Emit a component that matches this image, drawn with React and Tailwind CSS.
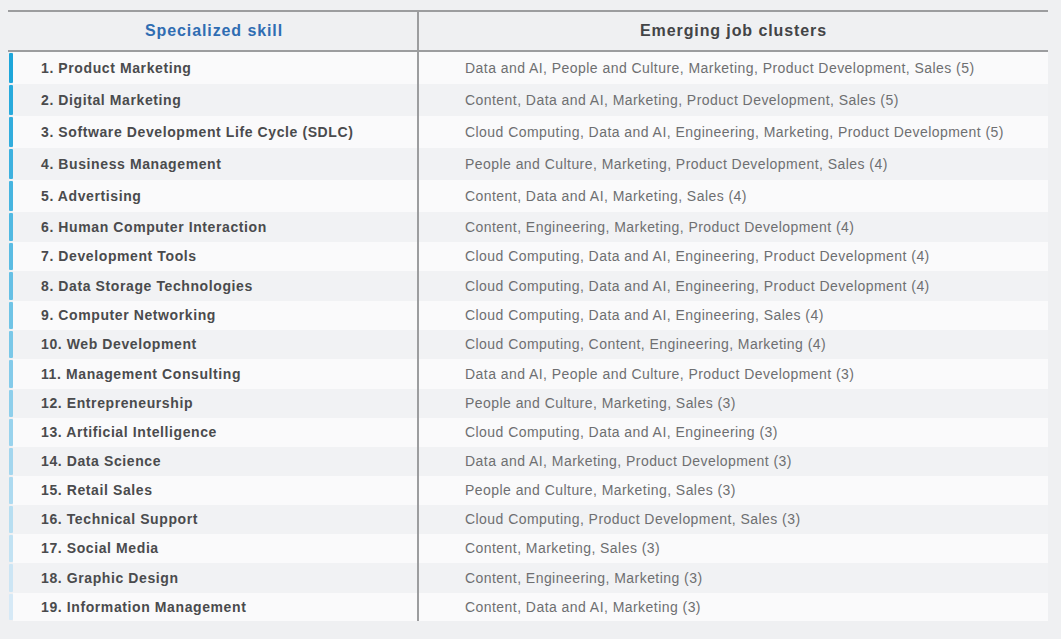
const rows = [
  ['1. Product Marketing', 'Data and AI, People and Culture, Marketing, Product Development, Sales (5)', 32],
  ['2. Digital Marketing', 'Content, Data and AI, Marketing, Product Development, Sales (5)', 32],
  ['3. Software Development Life Cycle (SDLC)', 'Cloud Computing, Data and AI, Engineering, Marketing, Product Development (5)', 32],
  ['4. Business Management', 'People and Culture, Marketing, Product Development, Sales (4)', 32],
  ['5. Advertising', 'Content, Data and AI, Marketing, Sales (4)', 32],
  ['6. Human Computer Interaction', 'Content, Engineering, Marketing, Product Development (4)', 30],
  ['7. Development Tools', 'Cloud Computing, Data and AI, Engineering, Product Development (4)', 29],
  ['8. Data Storage Technologies', 'Cloud Computing, Data and AI, Engineering, Product Development (4)', 30],
  ['9. Computer Networking', 'Cloud Computing, Data and AI, Engineering, Sales (4)', 29],
  ['10. Web Development', 'Cloud Computing, Content, Engineering, Marketing (4)', 29],
  ['11. Management Consulting', 'Data and AI, People and Culture, Product Development (3)', 30],
  ['12. Entrepreneurship', 'People and Culture, Marketing, Sales (3)', 29],
  ['13. Artificial Intelligence', 'Cloud Computing, Data and AI, Engineering (3)', 29],
  ['14. Data Science', 'Data and AI, Marketing, Product Development (3)', 29],
  ['15. Retail Sales', 'People and Culture, Marketing, Sales (3)', 29],
  ['16. Technical Support', 'Cloud Computing, Product Development, Sales (3)', 29],
  ['17. Social Media', 'Content, Marketing, Sales (3)', 29],
  ['18. Graphic Design', 'Content, Engineering, Marketing (3)', 30],
  ['19. Information Management', 'Content, Data and AI, Marketing (3)', 28],
];

// bar fades from strong blue to pale blue down the list
const barColor = (i) => {
  const t = i / (rows.length - 1);
  const from = [30, 166, 218];
  const to = [214, 233, 246];
  const c = from.map((v, k) => Math.round(v + (to[k] - v) * t));
  return `rgb(${c[0]}, ${c[1]}, ${c[2]})`;
};

export default function App() {
  return (
    <div className="h-[639px] w-[1061px] bg-[#eff0f2] pt-[10px] pl-[8px] font-['Liberation_Sans',Arial,sans-serif]">
      <div className="w-[1040px]">
        {/* Header */}
        <div className="grid grid-cols-[409px_2px_1fr] border-t-2 border-b-2 border-[#9c9d9f]">
          <div className="flex h-[38px] items-center justify-center pl-[3px] text-[16px] font-bold tracking-[0.9px] text-[#2f6db2]">
            Specialized skill
          </div>
          <div className="bg-[#9c9d9f]" />
          <div className="flex h-[38px] items-center justify-center text-[16px] font-bold tracking-[0.9px] text-[#434446]">
            Emerging job clusters
          </div>
        </div>

        {/* Rows */}
        <div className="grid grid-cols-[409px_2px_1fr]">
          {rows.map(([skill, clusters, h], i) => {
            const bg = i % 2 === 0 ? 'bg-[#fafafb]' : 'bg-[#f1f2f4]';
            return (
              <div key={skill} className="contents">
                <div className="flex items-stretch" style={{ height: h }}>
                  <div className="w-[1px]" />
                  <div className="my-[1px] w-[4px] rounded-[1px]" style={{ backgroundColor: barColor(i) }} />
                  <div className={`flex flex-1 items-center pl-[28px] text-[14px] font-bold tracking-[0.6px] text-[#4a4b4d] ${bg}`}>
                    {skill}
                  </div>
                </div>
                <div className="bg-[#9c9d9f]" />
                <div className={`flex items-center pl-[46px] text-[14px] tracking-[0.45px] text-[#6e6f71] ${bg}`}>
                  {clusters}
                </div>
              </div>
            );
          })}
        </div>
      </div>
    </div>
  );
}
